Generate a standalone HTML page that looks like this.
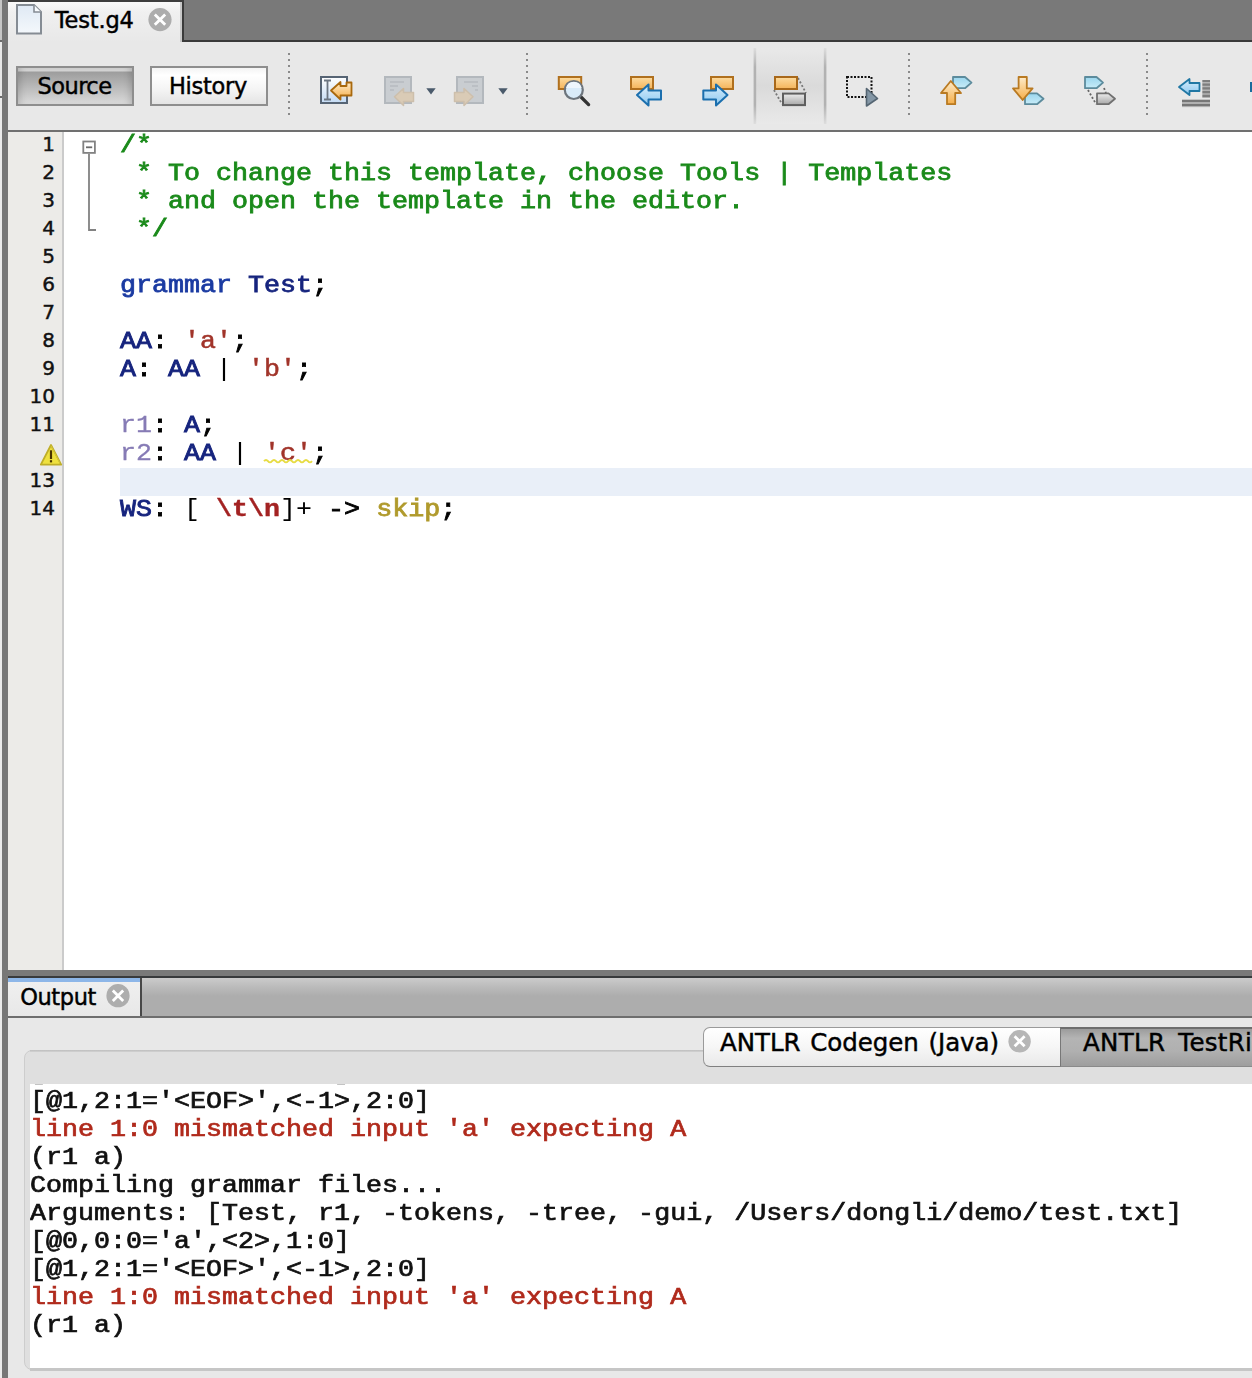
<!DOCTYPE html>
<html>
<head>
<meta charset="utf-8">
<title>Test.g4</title>
<style>
html,body{margin:0;padding:0;}
body{width:1252px;height:1378px;overflow:hidden;position:relative;background:#e8e8e8;font-family:"DejaVu Sans","Liberation Sans",sans-serif;color:#000;}
.abs{position:absolute;}
/* left strip */
#ls0{left:0;top:0;width:2px;height:1378px;background:linear-gradient(#c6c6c6 0,#c6c6c6 40px,#6a6a6a 40px,#6a6a6a 42px,#e8e8e8 42px,#e8e8e8 96px,#6a6a6a 96px,#6a6a6a 98px,#ebebeb 98px,#ebebeb 100%);}
#ls1{left:2px;top:0;width:6px;height:1378px;background:#777;}
/* top tab strip */
#topline{left:8px;top:0;width:176px;height:2px;background:#3e3e3e;}
#tabstrip{left:8px;top:0;width:1244px;height:40px;background:#797979;}
#tabstripb{left:182px;top:40px;width:1070px;height:2px;background:#3a3a3a;}
#tab1{left:8px;top:2px;width:172px;height:40px;background:linear-gradient(#fafafa 0,#f0f0f0 25%,#e8e8e8 100%);border-right:2px solid #c8c8c8;}
#tab1r{left:182px;top:2px;width:2px;height:38px;background:#3a3a3a;}
.lbl{white-space:nowrap;line-height:1;-webkit-text-stroke:0.45px #000;}
/* toolbar */
#toolbar{left:8px;top:42px;width:1244px;height:88px;background:#e8e8e8;}
#toolbarb{left:8px;top:130px;width:1244px;height:2px;background:#707070;}
.btn{box-sizing:border-box;border:2px solid #8e8e8e;}
#bsrc{left:16px;top:66px;width:118px;height:40px;box-shadow:inset 7px 0 7px -5px rgba(0,0,0,.16),inset -7px 0 7px -5px rgba(0,0,0,.16);background:linear-gradient(#d2d2d2 0,#d2d2d2 3px,#9d9d9d 4px,#b4b4b4 45%,#dadada 100%);}
#bhis{left:150px;top:66px;width:118px;height:40px;background:linear-gradient(#f4f4f4 0,#ffffff 20%,#f4f4f4 60%,#e4e4e4 100%);}
.sep{width:2px;background-image:repeating-linear-gradient(#8a8a8a 0,#8a8a8a 2px,transparent 2px,transparent 6px);}
/* editor */
#editor{left:64px;top:132px;width:1188px;height:838px;background:#fff;}
#gutter{left:8px;top:132px;width:54px;height:838px;background:#ecebe8;}
#gutterb{left:62px;top:132px;width:2px;height:838px;background:#cbcbcb;}
#hl{left:120px;top:468px;width:1132px;height:27.6px;background:#e9eff8;}
.ln{-webkit-text-stroke:0.45px #111;position:absolute;left:8px;width:47px;text-align:right;font-size:20px;line-height:28px;height:28px;color:#111;white-space:pre;}
.cl{position:absolute;left:120px;height:28px;line-height:28px;white-space:pre;font-family:"Liberation Mono",monospace;font-weight:normal;-webkit-text-stroke:0.8px currentColor;font-size:23.5px;transform:scaleX(1.1348);transform-origin:0 0;}
.c{color:#1a8a1a;}
.k{color:#1b3ba2;}
.t{color:#16247e;}
.s{color:#a1342a;-webkit-text-stroke:0.5px currentColor;}
.r{color:#867bb5;-webkit-text-stroke:0.3px currentColor;}
.e{color:#a32222;font-weight:bold;-webkit-text-stroke:0.35px currentColor;}
.a{color:#b09a2c;}
.n{-webkit-text-stroke:0;}
/* divider */
#div1{left:8px;top:970px;width:1244px;height:6px;background:#797979;}
#div2{left:8px;top:976px;width:1244px;height:2px;background:#383a3c;}
/* output */
#obar{left:8px;top:978px;width:1244px;height:38px;background:linear-gradient(#cbcbcb 0,#bcbcbc 22%,#adadad 47%,#adadad 100%);}
#obarb{left:8px;top:1016px;width:1244px;height:2px;background:#6e6e6e;}
#otab{left:8px;top:978px;width:132px;height:38px;background:linear-gradient(#f0f0f0,#e8e8e8);}
#otabt{left:8px;top:978px;width:132px;height:4px;background:#8db6e8;}
#otabr{left:140px;top:978px;width:2px;height:38px;background:#484848;}
#opanel{left:24px;top:1050px;width:1300px;height:320px;box-sizing:border-box;border:1px solid #cdcdcd;border-radius:8px;background:#dfdfdf;}
#owhite{left:30px;top:1084px;width:1222px;height:284px;background:#fff;overflow:hidden;}
#obot{left:30px;top:1368px;width:1222px;height:3px;background:#c6c6c6;}
.ol{position:absolute;left:0;height:28px;line-height:28px;white-space:pre;font-family:"Liberation Mono",monospace;font-weight:normal;-webkit-text-stroke:0.7px currentColor;font-size:23.5px;transform:scaleX(1.1348);transform-origin:0 0;color:#111;}
.oe{color:#b02a1c;}
#st1{left:703px;top:1027px;width:357px;height:40px;box-sizing:border-box;border:1px solid #9a9a9a;border-bottom-color:#808080;border-right:none;border-radius:7px 0 0 7px;background:linear-gradient(#ffffff 0,#f6f6f6 50%,#e9e9e9 100%);}
#st2{left:1060px;top:1027px;width:192px;height:40px;box-sizing:border-box;border-top:2px solid #6e6e6e;border-bottom:1px solid #8a8a8a;border-left:1px solid #777;background:linear-gradient(#9c9c9c 0,#b4b4b4 25%,#b0b0b0 60%,#9e9e9e 100%);}
#stline{left:30px;top:1050px;width:674px;height:2px;background:linear-gradient(#bdbdbd,#d2d2d2);}
</style>
</head>
<body>
<div class="abs" id="ls0"></div>
<div class="abs" id="ls1"></div>
<div class="abs" id="tabstrip"></div>
<div class="abs" id="tabstripb"></div>
<div class="abs" id="tab1"></div>
<div class="abs" id="tab1r"></div>
<div class="abs" id="topline"></div>
<div class="abs lbl" id="t_test" style="left:54.7px;top:9px;font-size:22.5px;letter-spacing:-0.15px;">Test.g4</div>

<div class="abs" id="toolbar"></div>
<div class="abs" id="toolbarb"></div>
<div class="abs btn" id="bsrc"></div>
<div class="abs btn" id="bhis"></div>
<div class="abs lbl" id="t_src" style="left:37.5px;top:75px;font-size:22.5px;letter-spacing:-0.55px;">Source</div>
<div class="abs lbl" id="t_his" style="left:169px;top:75px;font-size:22.5px;letter-spacing:-0.3px;">History</div>
<div class="abs sep" style="left:288px;top:53px;height:62px;"></div>
<div class="abs sep" style="left:526px;top:53px;height:62px;"></div>
<div class="abs sep" style="left:908px;top:53px;height:62px;"></div>
<div class="abs sep" style="left:1146px;top:53px;height:62px;"></div>
<!--ICONS_START-->
<svg class="abs" style="left:0;top:0;" width="1252" height="140" viewBox="0 0 1252 140">
<defs>
<filter id="soft" x="-20%" y="-20%" width="140%" height="140%"><feGaussianBlur stdDeviation="0.55"/></filter>
<linearGradient id="gOr" x1="0" y1="0" x2="0" y2="1"><stop offset="0" stop-color="#fddca0"/><stop offset="1" stop-color="#f4b45a"/></linearGradient>
<linearGradient id="gOr2" x1="0" y1="0" x2="0" y2="1"><stop offset="0" stop-color="#feeccb"/><stop offset="1" stop-color="#f5ae48"/></linearGradient>
<linearGradient id="gBl" x1="0" y1="0" x2="0" y2="1"><stop offset="0" stop-color="#d6edfc"/><stop offset="1" stop-color="#8cc8f0"/></linearGradient>
<linearGradient id="gTag" x1="0" y1="0" x2="0" y2="1"><stop offset="0" stop-color="#9ad6ee"/><stop offset="1" stop-color="#c8ecf8"/></linearGradient>
<linearGradient id="gGr" x1="0" y1="0" x2="0" y2="1"><stop offset="0" stop-color="#ececec"/><stop offset="1" stop-color="#a8a8a8"/></linearGradient>
<linearGradient id="gDoc" x1="0" y1="0" x2="0" y2="1"><stop offset="0" stop-color="#ffffff"/><stop offset="1" stop-color="#c4dbf4"/></linearGradient>
<linearGradient id="gFile" x1="0" y1="0" x2="0" y2="1"><stop offset="0" stop-color="#dfe9f4"/><stop offset="1" stop-color="#f4f8fc"/></linearGradient>
<linearGradient id="gPress" x1="0" y1="0" x2="0" y2="1"><stop offset="0" stop-color="#e9e9e9"/><stop offset="0.5" stop-color="#dadada"/><stop offset="1" stop-color="#e9e9e9"/></linearGradient>
<linearGradient id="gPressL" x1="0" y1="0" x2="0" y2="1"><stop offset="0" stop-color="#b2b2b2" stop-opacity="0.2"/><stop offset="0.25" stop-color="#b2b2b2"/><stop offset="0.75" stop-color="#b2b2b2"/><stop offset="1" stop-color="#b2b2b2" stop-opacity="0.2"/></linearGradient>
</defs>
<!-- file icon on tab -->
<path d="M17 5 H34 L41 12 V33.5 H17 Z" fill="url(#gFile)" stroke="#858c94" stroke-width="2" stroke-linejoin="miter"/>
<path d="M34 5 V12 H41" fill="#f8fbfe" stroke="#858c94" stroke-width="1.6"/>
<!-- tab close -->
<g filter="url(#soft)"><circle cx="160" cy="19.6" r="11.6" fill="#adadad"/>
<path d="M154.8 14.4 L165.2 24.8 M165.2 14.4 L154.8 24.8" stroke="#fff" stroke-width="2.8"/></g>
<!-- pressed toggle bg -->
<rect x="755" y="48" width="70" height="76" fill="url(#gPress)"/>
<rect x="753.6" y="48" width="2.6" height="76" fill="url(#gPressL)"/>
<rect x="823.8" y="48" width="2.6" height="76" fill="url(#gPressL)"/>
<!-- icon1: last edit -->
<rect x="321" y="77" width="26" height="26" fill="url(#gDoc)" stroke="#566474" stroke-width="2"/>
<path d="M324 80.5 H331 M324 99.5 H331 M327.5 80.5 V99.5" stroke="#6c7682" stroke-width="1.8" fill="none"/>
<path d="M331 90.5 L340.5 82 V86 H346.5 V82.5 H351.5 V95.5 H340.5 V99.5 Z" fill="url(#gOr2)" stroke="#a9690e" stroke-width="1.8" stroke-linejoin="round"/>
<!-- icon2: back (disabled) -->
<rect x="385" y="77" width="26" height="26" fill="#c9cdd1" stroke="#b3b8bd" stroke-width="2"/>
<path d="M390 82 H404 M390 86 H398 M390 90 H394" stroke="#b6bbc0" stroke-width="1.6"/>
<path d="M394.5 96.8 L403.5 88.5 V92.5 H413.5 V101.5 H403.5 V105.5 Z" fill="#dacbb6" stroke="#cdbfac" stroke-width="1.5" stroke-linejoin="round"/>
<path d="M426.3 88.3 H435.7 L431 94.6 Z" fill="#4a5a6b"/>
<!-- icon3: forward (disabled) -->
<rect x="457" y="77" width="26" height="26" fill="#c9cdd1" stroke="#b3b8bd" stroke-width="2"/>
<path d="M464 82 H478 M472 86 H478 M475 90 H478" stroke="#b6bbc0" stroke-width="1.6"/>
<path d="M473 96.8 L464 88.5 V92.5 H454.5 V101.5 H464 V105.5 Z" fill="#dacbb6" stroke="#cdbfac" stroke-width="1.5" stroke-linejoin="round"/>
<path d="M498.3 88.3 H507.7 L503 94.6 Z" fill="#4a5a6b"/>
<!-- icon4: find selection -->
<rect x="558.8" y="77" width="22.4" height="12" fill="url(#gOr)" stroke="#b0701e" stroke-width="2"/>
<path d="M580.5 96.5 L588.6 104.6" stroke="#333" stroke-width="3.3" stroke-linecap="round"/>
<circle cx="573.8" cy="90" r="9" fill="#d9ebf9" stroke="#6d757d" stroke-width="2.2"/>
<path d="M566 88 A8 8 0 0 1 581.6 88 Z" fill="#eef6fd"/>
<!-- icon5: find previous -->
<rect x="631" y="77" width="22" height="12" fill="url(#gOr)" stroke="#b0701e" stroke-width="2"/>
<path d="M637 95 L648.5 84.5 V90.5 H661 V99.5 H648.5 V105.5 Z" fill="url(#gBl)" stroke="#1b6fae" stroke-width="2" stroke-linejoin="round"/>
<!-- icon6: find next -->
<rect x="711" y="77" width="22" height="12" fill="url(#gOr)" stroke="#b0701e" stroke-width="2"/>
<path d="M727.5 95 L716 84.5 V90.5 H703.3 V99.5 H716 V105.5 Z" fill="url(#gBl)" stroke="#1b6fae" stroke-width="2" stroke-linejoin="round"/>
<!-- icon7: toggle highlight -->
<path d="M798 78 L806 93 M774 90 L782 104" stroke="#777" stroke-width="1.8" stroke-dasharray="2 2"/>
<rect x="775" y="77" width="22" height="12" fill="url(#gOr)" stroke="#a8681a" stroke-width="2"/>
<rect x="783" y="93.6" width="22" height="11.5" fill="url(#gGr)" stroke="#5e5e5e" stroke-width="2"/>
<!-- icon8: rect selection -->
<rect x="847" y="77" width="24.5" height="20" fill="none" stroke="#111" stroke-width="2" stroke-dasharray="2 1.5"/>
<path d="M866.5 88.5 V106 L877.5 98.5 Z" fill="#8497a6" stroke="#566673" stroke-width="1.6" stroke-linejoin="round"/>
<!-- icon9: prev bookmark -->
<path d="M953 77 H965 L971.5 82.6 L965 88.2 H953 Z" fill="url(#gTag)" stroke="#5c8b9c" stroke-width="1.8" stroke-linejoin="round"/>
<path d="M950.8 81 L961 93 H955.2 V104.2 H947 V93 H941 Z" fill="url(#gOr2)" stroke="#b97a22" stroke-width="1.8" stroke-linejoin="round"/>
<!-- icon10: next bookmark -->
<path d="M1025 93.4 H1037 L1043.5 98.8 L1037 104.2 H1025 Z" fill="url(#gTag)" stroke="#5c8b9c" stroke-width="1.8" stroke-linejoin="round"/>
<path d="M1018.6 77 H1026.8 V88.4 H1032.6 L1022.7 100 L1013 88.4 H1018.6 Z" fill="url(#gOr2)" stroke="#b97a22" stroke-width="1.8" stroke-linejoin="round"/>
<!-- icon11: toggle bookmark -->
<path d="M1088 90 L1096 104 M1104 88 L1106 93" stroke="#666" stroke-width="1.8" stroke-dasharray="2 2"/>
<path d="M1085 77 H1096.5 L1103 82.6 L1096.5 88.2 H1085 Z" fill="url(#gTag)" stroke="#5c8b9c" stroke-width="1.8" stroke-linejoin="round"/>
<path d="M1097 93.4 H1108.5 L1115 98.8 L1108.5 104.2 H1097 Z" fill="url(#gGr)" stroke="#707070" stroke-width="1.8" stroke-linejoin="round"/>
<!-- icon12: shift left -->
<rect x="1202.3" y="80" width="7.7" height="18" fill="#b4b4b4"/>
<path d="M1179 87 L1189.5 79 V83 H1199.5 V91 H1189.5 V95 Z" fill="url(#gBl)" stroke="#2077a4" stroke-width="1.8" stroke-linejoin="round"/>
<path d="M1202.5 81 H1210 M1202.5 84.7 H1210 M1202.5 88.4 H1210 M1202.5 92.1 H1210 M1202.5 95.8 H1210" stroke="#7e7e7e" stroke-width="2.2"/>
<path d="M1182 101 H1210 M1182 105 H1210" stroke="#5c5c5c" stroke-width="2.4"/>
<rect x="1182" y="100" width="28" height="7.2" fill="#9a9a9a" opacity="0.45"/>
<!-- icon13 partial -->
<rect x="1250" y="82" width="4" height="10" fill="#1a6b9c"/>
</svg>
<!--ICONS_END-->

<div class="abs" id="gutter"></div>
<div class="abs" id="gutterb"></div>
<div class="abs" id="editor"></div>
<div class="abs" id="hl"></div>
<div class="ln" style="top:130px;">1</div>
<div class="ln" style="top:158px;">2</div>
<div class="ln" style="top:186px;">3</div>
<div class="ln" style="top:214px;">4</div>
<div class="ln" style="top:242px;">5</div>
<div class="ln" style="top:270px;">6</div>
<div class="ln" style="top:298px;">7</div>
<div class="ln" style="top:326px;">8</div>
<div class="ln" style="top:354px;">9</div>
<div class="ln" style="top:382px;">10</div>
<div class="ln" style="top:410px;">11</div>
<div class="ln" style="top:466px;">13</div>
<div class="ln" style="top:494px;">14</div>
<div class="cl" style="top:132px;"><span class="c">/*</span></div>
<div class="cl" style="top:160px;"><span class="c"> * To change this template, choose Tools | Templates</span></div>
<div class="cl" style="top:188px;"><span class="c"> * and open the template in the editor.</span></div>
<div class="cl" style="top:216px;"><span class="c"> */</span></div>
<div class="cl" style="top:272px;"><span class="k">grammar</span> <span class="t">Test</span>;</div>
<div class="cl" style="top:328px;"><span class="t">AA</span>: <span class="s">'a'</span>;</div>
<div class="cl" style="top:356px;"><span class="t">A</span>: <span class="t">AA</span> <span class="n">|</span> <span class="s">'b'</span>;</div>
<div class="cl" style="top:412px;"><span class="r">r1</span>: <span class="t">A</span>;</div>
<div class="cl" style="top:440px;"><span class="r">r2</span>: <span class="t">AA</span> <span class="n">|</span> <span class="s w">'c'</span>;</div>
<div class="cl" style="top:496px;"><span class="t">WS</span>: <span class="n">[</span> <span class="e">\t\n</span><span class="n">]+</span> -&gt; <span class="a">skip</span>;</div>


<svg class="abs" style="left:0;top:132px;" width="1252" height="400" viewBox="0 132 1252 400">
<!-- fold marker -->
<rect x="83.3" y="141.5" width="11.6" height="11.4" fill="#fff" stroke="#828282" stroke-width="1.8"/>
<path d="M86 147.3 H92.2" stroke="#6a6a6a" stroke-width="1.8"/>
<path d="M89 153.8 V230 H96" fill="none" stroke="#828282" stroke-width="1.8"/>
<!-- warning icon -->
<path d="M51 445 L61.2 464.6 H40.8 Z" fill="#efe13f" stroke="#bfae28" stroke-width="1.8" stroke-linejoin="round"/>
<path d="M51 445.8 L60 463.2" stroke="#d6c838" stroke-width="1"/>
<path d="M51 450.3 V459" stroke="#4a3400" stroke-width="2.2"/>
<rect x="49.9" y="460.2" width="2.2" height="2.2" fill="#4a3400"/>
<!-- wavy underline -->
<path d="M264 461.2 q2 -2.4 4 0 t4 0 t4 0 t4 0 t4 0 t4 0 t4 0 t4 0 t4 0 t4 0 t4 0 t4 0" fill="none" stroke="#e7dc44" stroke-width="1.9"/>
</svg>
<div class="abs" id="div1"></div>
<div class="abs" id="div2"></div>
<div class="abs" id="obar"></div>
<div class="abs" id="obarb"></div>
<div class="abs" id="otab"></div>
<div class="abs" id="otabt"></div>
<div class="abs" id="otabr"></div>
<div class="abs lbl" id="t_out" style="left:20.2px;top:985.5px;font-size:22.5px;letter-spacing:-0.4px;">Output</div>
<div class="abs" id="opanel"></div>
<div class="abs" id="stline"></div>
<div class="abs" id="owhite">
<div class="ol " style="top:-25px;">[@0,0:0='a',&lt;2&gt;,1:0]</div>
<div class="ol " style="top:4px;">[@1,2:1='&lt;EOF&gt;',&lt;-1&gt;,2:0]</div>
<div class="ol oe" style="top:32px;">line 1:0 mismatched input 'a' expecting A</div>
<div class="ol " style="top:60px;">(r1 a)</div>
<div class="ol " style="top:88px;">Compiling grammar files...</div>
<div class="ol " style="top:116px;">Arguments: [Test, r1, -tokens, -tree, -gui, /Users/dongli/demo/test.txt]</div>
<div class="ol " style="top:144px;">[@0,0:0='a',&lt;2&gt;,1:0]</div>
<div class="ol " style="top:172px;">[@1,2:1='&lt;EOF&gt;',&lt;-1&gt;,2:0]</div>
<div class="ol oe" style="top:200px;">line 1:0 mismatched input 'a' expecting A</div>
<div class="ol " style="top:228px;">(r1 a)</div>
</div>
<div class="abs" id="obot"></div>
<div class="abs" id="st1"></div>
<div class="abs" id="st2"></div>
<div class="abs lbl" id="t_st1" style="left:720px;top:1031px;font-size:24.5px;word-spacing:2px;letter-spacing:-0.05px;">ANTLR Codegen (Java)</div>
<div class="abs lbl" id="t_st2" style="left:1083px;top:1031px;font-size:24.5px;word-spacing:5px;letter-spacing:0.3px;">ANTLR TestRig</div>

<svg class="abs" style="left:0;top:976px;" width="1252" height="100" viewBox="0 976 1252 100">
<defs><filter id="soft2" x="-20%" y="-20%" width="140%" height="140%"><feGaussianBlur stdDeviation="0.55"/></filter></defs>
<g filter="url(#soft2)"><circle cx="118" cy="995.7" r="11.6" fill="#adadad"/>
<path d="M112.8 990.5 L123.2 1000.9 M123.2 990.5 L112.8 1000.9" stroke="#fff" stroke-width="2.8"/>
<circle cx="1019.6" cy="1041.3" r="11.2" fill="#b6b6b6"/>
<path d="M1014.6 1036.3 L1024.6 1046.3 M1024.6 1036.3 L1014.6 1046.3" stroke="#fff" stroke-width="2.8"/></g>
</svg>
</body>
</html>
